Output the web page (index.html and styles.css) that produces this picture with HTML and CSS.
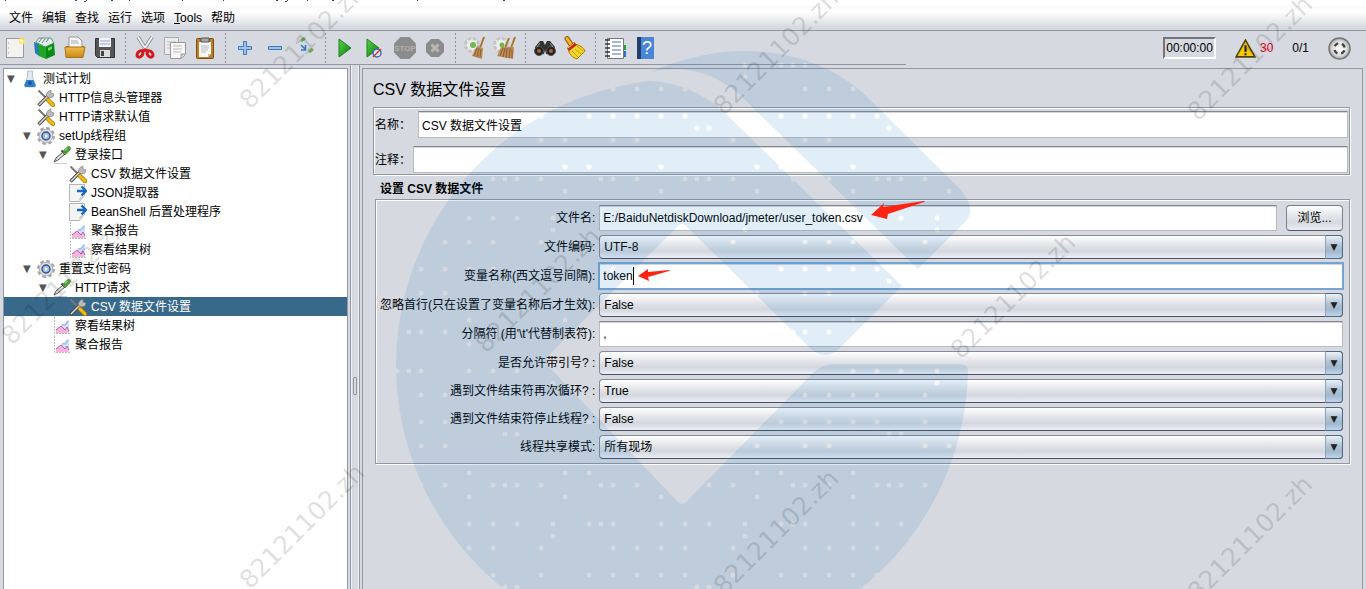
FILE: index.html
```
<!DOCTYPE html>
<html lang="zh-CN">
<head>
    <meta charset="UTF-8">
    <meta name="viewport" content="width=device-width, initial-scale=1.0">
    <title>CSV 数据文件设置</title>
    <link rel="stylesheet" href="styles.css">
</head>
<body>
    <!-- 图标定义 -->
    <svg class="defs" width="0" height="0" aria-hidden="true">
        <defs>
            <linearGradient id="g-green" x1="0" y1="0" x2="1" y2="1"><stop offset="0" stop-color="#5fd04a"/><stop offset="1" stop-color="#067a10"/></linearGradient>
            <linearGradient id="g-gold" x1="0" y1="0" x2="0" y2="1"><stop offset="0" stop-color="#f0bc4c"/><stop offset="1" stop-color="#c98a17"/></linearGradient>
            <radialGradient id="g-ball"><stop offset="0" stop-color="#fff"/><stop offset=".7" stop-color="#ddd"/><stop offset="1" stop-color="#9a9a9a"/></radialGradient>
            <symbol id="i-tools" viewBox="0 0 18 18">
                <path d="M1.500 1.500l8 8" stroke="#777" stroke-width="2"/>
                <path d="M1.500 16.500L12 6" stroke="#444" stroke-width="3.400"/>
                <path d="M2 16L12 6" stroke="#d8d8d8" stroke-width="1.600"/>
                <path d="M11 2.500l3-1.500v3l3 1-1 3-4 1-3-3z" fill="#bbb" stroke="#777" stroke-width=".6"/>
                <path d="M11 11l5 5" stroke="#a97c00" stroke-width="4.400" stroke-linecap="round"/>
                <path d="M11 11l5 5" stroke="#f3bd18" stroke-width="2.800" stroke-linecap="round"/>
            </symbol>
            <symbol id="i-gear" viewBox="0 0 18 18">
                <circle cx="9" cy="9" r="7.800" fill="none" stroke="#a5a5a5" stroke-width="2.400" stroke-dasharray="3.600 2.530"/>
                <circle cx="9" cy="9" r="6.800" fill="#dedede" stroke="#b0b0b0"/>
                <circle cx="9" cy="9" r="4" fill="#9dbbe6" stroke="#35588f" stroke-width="1.500"/>
                <path d="M8 7l3 2-3 2z" fill="#fff"/>
            </symbol>
            <symbol id="i-dropper" viewBox="0 0 18 18">
                <path d="M1 16l2-4 7-6 2 2-7 6z" fill="#ddd" stroke="#555"/>
                <path d="M8.500 4.500l4 4" stroke="#333" stroke-width="2"/>
                <path d="M12 6L15.500 2.500" stroke="#4f9a3c" stroke-width="4.600" stroke-linecap="round"/>
                <path d="M12 4.500L14.500 2" stroke="#8fca7c" stroke-width="1.500"/>
                <path d="M1 17.500h13" stroke="#ccc"/>
            </symbol>
            <symbol id="i-post" viewBox="0 0 18 18">
                <path d="M.5.5h15v11l-5 6H.5z" fill="#f4f4f4" stroke="#b5b5b5"/>
                <path d="M10 17c0-4 2-5 5-5z" fill="#ccc"/>
                <path d="M8 7h8M12.500 2.500L17 7l-4.500 4.500" fill="none" stroke="#1668c4" stroke-width="2.400"/>
            </symbol>
            <symbol id="i-chart" viewBox="0 0 18 18">
                <path d="M1.500 0v16.500H18" fill="none" stroke="#bbb" stroke-dasharray="2 1"/>
                <path d="M8 9c0-2 3-1 4-3s2-3 4-3v13H8z" fill="#cfe0fa"/>
                <path d="M9 8c3-1 3 2 6-4" fill="none" stroke="#7fa8e6"/>
                <path d="M3 16v-3l5-4 4 4 2-2 2 5z" fill="#f5b3dd"/>
                <path d="M3 13l5-4 4 4 2-3 2 4" fill="none" stroke="#c25aa8"/>
            </symbol>
            <symbol id="i-flask" viewBox="0 0 18 18">
                <path d="M6.500 1h5v6l3 8q.5 2-1.500 2H5q-2 0-1.500-2l3-8z" fill="#dfe9f2" stroke="#9fb2c2" stroke-width=".7"/>
                <path d="M5.500 10h7l2 5q.5 2-1.500 2H5q-2 0-1.500-2z" fill="#2f7fcc"/>
                <circle cx="9" cy="13" r="2" fill="#1558a8"/>
            </symbol>
        </defs>
    </svg>

    <div class="page-edge" aria-hidden="true">
        <svg width="520" height="2"><path d="M5 .5h1M75 .5h2M84 1.500h2M86 .5h1M111 .5h2M129 .5h1M182 .5h1M223 .5h1M276 .5h2M285 1.500h2M287 .5h1M307 .5h1M332 .5h2M417 .5h1M503 .5h2" stroke="#445"/></svg>
    </div>

    <nav class="menubar">
        <button>文件</button>
        <button>编辑</button>
        <button>查找</button>
        <button>运行</button>
        <button>选项</button>
        <button><u>T</u>ools</button>
        <button>帮助</button>
    </nav>

    <header class="topbar">
        <div class="toolbar">
            <button aria-label="新建"><svg viewBox="0 0 24 24"><path d="M3.500 2.500h17v19h-17z" fill="#f3f3f2" stroke="#999"/><path d="M5 7h1M5 12h1M5 17h1" stroke="#999"/><circle cx="19" cy="5" r="3.500" fill="#f8e85b" opacity=".8"/><circle cx="19" cy="5" r="1.500" fill="#fffbd0"/></svg></button>
            <button aria-label="模板"><svg viewBox="0 0 24 24"><path d="M3 6l3-4h12l3 5-9 4z" fill="#e0ece8" stroke="#6f9287"/><path d="M6 6l3-4M9 7l3-4M13 6l3-4" stroke="#5c8c85"/><path d="M1 6l5 2v12l-4-3z" fill="#247bb5"/><path d="M5 8l8 3v12l-7-3z" fill="#20a526"/><path d="M13 11l8-4 1 12-9 4z" fill="#078a18"/><path d="M15 12l4-2v3l-4 2z" fill="#72d75e"/></svg></button>
            <button aria-label="打开"><svg viewBox="0 0 24 24"><path d="M3 10h18v10H3z" fill="#a66b13"/><path d="M6 1h9l4 4v9H6z" fill="#f7f7f7" stroke="#999"/><path d="M8 5h7M8 7h8" stroke="#aaa"/><path d="M2 11h20l-2 10.500H3z" fill="url(#g-gold)" stroke="#a97414"/></svg></button>
            <button aria-label="保存"><svg viewBox="0 0 24 24"><path d="M2.500 2.500h19v19h-17l-2-2z" fill="#555" stroke="#333"/><path d="M6 2h12v9H6z" fill="#f2f5f9"/><path d="M7 5h10M7 8h10" stroke="#90a9c6"/><path d="M7 14h10v7H7z" fill="#ddd"/><path d="M8 15h3v5H8z" fill="#444"/></svg></button>
            <span class="sep"></span>
            <button aria-label="剪切"><svg viewBox="0 0 24 24"><path d="M5 1l9 14M19 1l-9 14" stroke="#888" stroke-width="3.600"/><path d="M5 1l9 14M19 1l-9 14" stroke="#eee" stroke-width="2"/><ellipse cx="7" cy="18" rx="2.500" ry="3.500" transform="rotate(40 7 18)" fill="none" stroke="#d3191c" stroke-width="3"/><ellipse cx="17" cy="18" rx="2.500" ry="3.500" transform="rotate(-40 17 18)" fill="none" stroke="#d3191c" stroke-width="3"/><path d="M9 14l3-2 3 2-3 2z" fill="#d3191c"/></svg></button>
            <button aria-label="复制"><svg viewBox="0 0 24 24"><path d="M1.500 1.500h14v17h-14z" fill="#ececec" stroke="#aaa"/><path d="M4 6h9M4 9h9M4 12h9" stroke="#bbb"/><path d="M7.500 6.500h15v12l-4 4h-11z" fill="#f7f7f7" stroke="#999"/><path d="M10 10h9M10 13h9M10 16h8" stroke="#bbb"/><path d="M18 22v-4h4" fill="#ccc" stroke="#999"/></svg></button>
            <button aria-label="粘贴"><svg viewBox="0 0 24 24"><rect x="3.500" y="2.500" width="17" height="20" rx="1" fill="#bb7f25" stroke="#7d4c0b"/><path d="M6 6h12v12l-3 3H6z" fill="#f8f8f8"/><path d="M8 10h8M8 12h8M8 14h7M8 16h5" stroke="#bbb"/><path d="M8 2h8v4H8z" fill="#aaa" stroke="#555"/><path d="M15 21v-3h3" fill="#bbb"/></svg></button>
            <span class="sep"></span>
            <button aria-label="展开"><svg viewBox="0 0 24 24"><path d="M10.500 5.500h3v5h5v3h-5v5h-3v-5h-5v-3h5z" fill="#9fc4ec" stroke="#3d78bd"/></svg></button>
            <button aria-label="折叠"><svg viewBox="0 0 24 24"><path d="M5.500 10.500h13v3h-13z" fill="#9fc4ec" stroke="#3d78bd"/></svg></button>
            <button aria-label="切换"><svg viewBox="0 0 24 24"><path d="M3 7l6-3" stroke="#bbb" stroke-width="2"/><path d="M8 5l4-3" stroke="#6aac5d" stroke-width="3"/><path d="M12 18l5-3" stroke="#bbb" stroke-width="2"/><path d="M16 16l4-3" stroke="#6aac5d" stroke-width="3"/><path d="M8 9l4 4M12.500 9v5H8" fill="none" stroke="#3076cf" stroke-width="1.600"/></svg></button>
            <span class="sep"></span>
            <button aria-label="启动"><svg viewBox="0 0 24 24"><path d="M6 3l12 9-12 9z" fill="url(#g-green)" stroke="#178319"/></svg></button>
            <button aria-label="不停顿开始"><svg viewBox="0 0 24 24"><path d="M4 3l12 9-12 9z" fill="url(#g-green)" stroke="#178319"/><circle cx="14" cy="17" r="4" fill="#e9eef8" fill-opacity=".8" stroke="#3b6dbb" stroke-width="1.500"/><path d="M10 21l8-8" stroke="#d4302d" stroke-width="1.500"/></svg></button>
            <button aria-label="停止" disabled><svg viewBox="0 0 24 24"><path d="M7.500 1h9L23 7.500v9L16.500 23h-9L1 16.500v-9z" fill="#8c8c8c"/><text class="stop-text" x="12" y="15" text-anchor="middle">STOP</text></svg></button>
            <button aria-label="关闭" disabled><svg viewBox="0 0 24 24"><path d="M8 3h8l5 5v8l-5 5H8l-5-5V8z" fill="#8c8c8c"/><path d="M8.500 8.500l7 7m0-7l-7 7" stroke="#b8b8b8" stroke-width="2.800"/></svg></button>
            <span class="sep"></span>
            <button aria-label="清除"><svg viewBox="0 0 24 24"><circle cx="9" cy="9" r="6.500" fill="#eee" stroke="#c4c4c4" stroke-width="3" stroke-dasharray="3.500 1.600"/><circle cx="10" cy="9" r="3" fill="#71b94c"/><path d="M21 1l-4 11" stroke="#a9772f" stroke-width="2"/><path d="M14 10l6 2-1 11-10-3z" fill="#bd8c57"/><path d="M14 12l-3 8m5-8l-2 9m4-8l-1 8" stroke="#8c5d2f"/></svg></button>
            <button aria-label="清除全部"><svg viewBox="0 0 24 24"><circle cx="8" cy="9" r="6.500" fill="#eee" stroke="#c4c4c4" stroke-width="3" stroke-dasharray="3.500 1.600"/><circle cx="9" cy="9" r="2.500" fill="#71b94c"/><path d="M16 2l-4 10M22 1l-4 11" stroke="#a9772f" stroke-width="2"/><path d="M8 11h13l-1 12-16-3z" fill="#bd8c57"/><path d="M10 12l-3 8m5-8l-2 9m4-9l-1 10m4-10l-1 10m3-9v9" stroke="#8c5d2f"/></svg></button>
            <span class="sep"></span>
            <button aria-label="搜索"><svg viewBox="0 0 24 24"><path d="M2 11l5-6h3l2 4 2-4h3l5 6-2 8-7-1-1-4-1 4-7 1z" fill="#333"/><circle cx="6" cy="15" r="4.500" fill="#222" stroke="#555"/><circle cx="18" cy="15" r="4.500" fill="#222" stroke="#555"/><circle cx="6" cy="15" r="2" fill="#a8663f"/><circle cx="18" cy="15" r="2" fill="#a8663f"/><path d="M7 7l-3 4m13-4l3 4" stroke="#999"/></svg></button>
            <button aria-label="重置搜索"><svg viewBox="0 0 24 24"><path d="M4 2.500l4 6" stroke="#94610c" stroke-width="5" stroke-linecap="round"/><path d="M4 2.500l4 6" stroke="#eab735" stroke-width="3" stroke-linecap="round"/><path d="M5 13l7-5q8 2 10 7l-8 8q-7-2-9-10z" fill="#f4d629" stroke="#a47b09"/><path d="M4 12l7-6 3 3-8 6z" fill="#c8291c"/><path d="M5 12l6-5" stroke="#f4d629"/><path d="M9 15l6 6m-3-8l6 5m-4-8l6 5" stroke="#c59b12"/></svg></button>
            <span class="sep"></span>
            <button aria-label="函数助手"><svg viewBox="0 0 24 24"><path d="M19 9h4v5h-4z" fill="#20a531"/><path d="M19 15h4v6h-4z" fill="#2876c9"/><path d="M4.500 2.500h16v20h-16z" fill="#fff" stroke="#777"/><path d="M2 4h5M2 8h5M2 12h5M2 16h5M2 20h5" stroke="#333" stroke-width="1.500"/><path d="M9 6h9M9 10h9M9 14h9M9 18h9" stroke="#4772b3"/></svg></button>
            <button aria-label="帮助"><svg viewBox="0 0 24 24"><path d="M4 1h17v22H4z" fill="#4a86d8"/><path d="M4 1h4v22H4z" fill="#223f68"/><text class="help-text" x="14" y="18" text-anchor="middle">?</text></svg></button>
        </div>
        <div class="status">
            <output class="timer">00:00:00</output>
            <button class="warn"><svg viewBox="0 0 20 18"><path d="M10 1l9 16H1z" fill="#f5c80e" stroke="#4f4408" stroke-width="1.500"/><path d="M10 6v6m0 1.500v2" stroke="#222" stroke-width="2"/></svg><span>30</span></button>
            <span class="threads">0/1</span>
            <svg class="remote" viewBox="0 0 24 24"><circle cx="12" cy="12" r="11" fill="url(#g-ball)" stroke="#777" stroke-width="1.500"/><circle cx="12" cy="12" r="5.500" fill="none" stroke="#444" stroke-width="2.500" stroke-dasharray="4.600 4.040" stroke-dashoffset="-2"/></svg>
        </div>
    </header>

    <div class="workspace">
        <aside class="tree">
            <ul>
                <li class="lv0"><i>▼</i><svg><use href="#i-flask"/></svg>测试计划</li>
                <li class="lv1"><svg><use href="#i-tools"/></svg>HTTP信息头管理器</li>
                <li class="lv1"><svg><use href="#i-tools"/></svg>HTTP请求默认值</li>
                <li class="lv1"><i>▼</i><svg><use href="#i-gear"/></svg>setUp线程组</li>
                <li class="lv2"><i>▼</i><svg><use href="#i-dropper"/></svg>登录接口</li>
                <li class="lv3"><svg><use href="#i-tools"/></svg>CSV 数据文件设置</li>
                <li class="lv3"><svg><use href="#i-post"/></svg>JSON提取器</li>
                <li class="lv3"><svg><use href="#i-post"/></svg>BeanShell 后置处理程序</li>
                <li class="lv3"><svg><use href="#i-chart"/></svg>聚合报告</li>
                <li class="lv3"><svg><use href="#i-chart"/></svg>察看结果树</li>
                <li class="lv1"><i>▼</i><svg><use href="#i-gear"/></svg>重置支付密码</li>
                <li class="lv2"><i>▼</i><svg><use href="#i-dropper"/></svg>HTTP请求</li>
                <li class="lv3 selected"><svg><use href="#i-tools"/></svg>CSV 数据文件设置</li>
                <li class="lv2"><svg><use href="#i-chart"/></svg>察看结果树</li>
                <li class="lv2"><svg><use href="#i-chart"/></svg>聚合报告</li>
            </ul>
        </aside>
        <div class="splitter"><span class="grip"></span></div>
        <main class="panel">
            <h1>CSV 数据文件设置</h1>
            <div class="group meta">
                <div class="meta-row">
                    <label for="name">名称：</label>
                    <input id="name" type="text" value="CSV 数据文件设置">
                </div>
                <div class="meta-row">
                    <label for="comment">注释：</label>
                    <input id="comment" type="text">
                </div>
            </div>

            <h2>设置 CSV 数据文件</h2>
            <div class="group config">
                <label for="filename">文件名:</label>
                <div class="field file-field">
                    <input id="filename" type="text" value="E:/BaiduNetdiskDownload/jmeter/user_token.csv">
                    <button class="browse">浏览...</button>
                    <svg class="mark mark-file" viewBox="0 0 54 20"><path d="M0 14L13 2l-1 4L53 0q2 0 0 1L17 13l-1 5z" fill="#ff2412"/></svg>
                </div>
                <label for="encoding">文件编码:</label>
                <div class="field combo"><select id="encoding"><option>UTF-8</option></select></div>
                <label for="vars">变量名称(西文逗号间隔):</label>
                <div class="field">
                    <input id="vars" class="focused" type="text" value="token">
                    <span class="caret"></span>
                    <svg class="mark mark-vars" viewBox="0 0 32 12"><path d="M0 7L10 0v3l21-2q2 0 0 1L10 8l1 4z" fill="#ff2412"/></svg>
                </div>
                <label for="ignore">忽略首行(只在设置了变量名称后才生效):</label>
                <div class="field combo"><select id="ignore"><option>False</option></select></div>
                <label for="delimiter">分隔符 (用'\t'代替制表符):</label>
                <div class="field"><input id="delimiter" type="text" value=","></div>
                <label for="quoted">是否允许带引号? :</label>
                <div class="field combo"><select id="quoted"><option>False</option></select></div>
                <label for="recycle">遇到文件结束符再次循环? :</label>
                <div class="field combo"><select id="recycle"><option>True</option></select></div>
                <label for="stop">遇到文件结束符停止线程? :</label>
                <div class="field combo"><select id="stop"><option>False</option></select></div>
                <label for="share">线程共享模式:</label>
                <div class="field combo"><select id="share"><option>所有现场</option></select></div>
            </div>
        </main>
    </div>

    <!-- 水印 -->
    <svg class="watermark" width="1366" height="589" aria-hidden="true">
        <mask id="dots" maskUnits="userSpaceOnUse" x="390" y="40" width="590" height="640">
            <path d="M390 40h590v640H390z" fill="#fff"/>
            <path id="dot-path" stroke="#000" stroke-width="5" stroke-linecap="round"/>
        </mask>
        <g mask="url(#dots)" fill="#1473be" fill-opacity=".12">
            <path d="M960 364Q968 364 968 372A286 286 0 1 1 650 81Q690 83 722 110L902 286L842 346Q825 364 808 346L686 226Q682 222 678 226L550 354Q543 361 550 368L678 502Q682 506 686 502L812 374Q822 364 834 364Z"/>
            <path d="M650 72Q700 51 745 51Q815 52 862 92L960 189Q979 211 963 224L918 269L740 95Q700 60 650 72Z"/>
        </g>
        <g class="stamp">
            <text transform="translate(250 110) rotate(-45)">82121102.zh</text>
            <text transform="translate(12 346) rotate(-45)">82121102.zh</text>
            <text transform="translate(250 590) rotate(-45)">82121102.zh</text>
            <text transform="translate(486 354) rotate(-45)">82121102.zh</text>
            <text transform="translate(724 116) rotate(-45)">82121102.zh</text>
            <text transform="translate(961 360) rotate(-45)">82121102.zh</text>
            <text transform="translate(724 596) rotate(-45)">82121102.zh</text>
            <text transform="translate(1198 122) rotate(-45)">82121102.zh</text>
            <text transform="translate(1198 602) rotate(-45)">82121102.zh</text>
        </g>
    </svg>
    <script src="dots.js"></script>
</body>
</html>
```
FILE: styles.css
```
*, *::before, *::after {
    box-sizing: border-box;
}
body {
    margin: 0;
    height: 100vh;
    display: flex;
    flex-direction: column;
    overflow: hidden;
    position: relative;
    background: #d6d9e0;
    color: #000;
    font-family: "Liberation Sans", "Noto Sans CJK SC", sans-serif;
    font-size: 12px;
    line-height: 18px;
}
button, input, select {
    font: inherit;
    color: inherit;
}
.defs {
    position: absolute;
}
.page-edge {
    height: 6px;
    background: #fff;
}
.page-edge svg {
    display: block;
}
.menubar {
    display: flex;
    gap: 9px;
    height: 25px;
    padding: 0 9px;
    background: linear-gradient(#f8f9fa, #fff 25%, #d6d9e0 90%);
    border-bottom: 1px solid #9297a1;
}
.menubar button {
    padding: 0;
    border: none;
    background: none;
}
.topbar {
    display: flex;
    height: 34px;
}
.toolbar {
    flex: 1;
    display: flex;
    border-bottom: 1px solid #9297a1;
}
.toolbar button {
    width: 30px;
    padding: 0;
    border: none;
    background: none;
    display: flex;
    align-items: center;
    justify-content: center;
}
.toolbar svg {
    width: 24px;
    height: 24px;
}
.sep {
    width: 10px;
    background: linear-gradient(#8b8f99 50%, transparent 50%) 5px 2px / 1px 4px repeat-y;
}
.stop-text {
    font-size: 8px;
    font-weight: bold;
    fill: #b0b0b0;
}
.help-text {
    font-size: 18px;
    fill: #fff;
}
.status {
    flex: 0 0 460px;
    display: flex;
    align-items: center;
    justify-content: flex-end;
    gap: 19px;
    padding-right: 15px;
}
.timer {
    padding: 0 1px;
    border: 2px solid;
    border-color: #73757a #fff #fff #73757a;
}
.warn {
    display: flex;
    align-items: center;
    gap: 4px;
    padding: 0;
    border: none;
    background: none;
    color: #f00018;
}
.warn svg {
    width: 21px;
    height: 19px;
}
.remote {
    width: 23px;
    height: 23px;
}
.workspace {
    flex: 1;
    display: flex;
    min-height: 0;
    padding: 3px 3px 0;
}
.tree {
    flex: 0 0 345px;
    border: 1px solid #9297a1;
    border-bottom: none;
    background: #fff;
}
.tree ul {
    list-style: none;
    margin: 0;
    padding: 0;
}
.tree li {
    display: flex;
    align-items: center;
    gap: 4px;
    height: 19px;
    white-space: nowrap;
}
.tree li svg {
    width: 18px;
    height: 18px;
}
.tree i {
    width: 10px;
    margin-left: -14px;
    font: 10px "DejaVu Sans", sans-serif;
    color: #555;
}
.lv0 {
    padding-left: 17px;
}
.lv1 {
    padding-left: 33px;
}
.lv2 {
    padding-left: 49px;
}
.lv3 {
    padding-left: 65px;
}
.tree .selected {
    background: #39698a;
    color: #fff;
}
.splitter {
    flex: 0 0 14px;
    margin: -3px 0 0 0;
    display: flex;
    align-items: center;
    justify-content: center;
    background: linear-gradient(to right, transparent 2px, #9297a1 2px, #9297a1 3px, #f0f1f4 3px, #f0f1f4 4px, transparent 4px, transparent 10px, #f0f1f4 10px, #f0f1f4 11px, #9297a1 11px, #9297a1 12px, transparent 12px);
}
.grip {
    width: 4px;
    height: 18px;
    margin-top: 118px;
    border: 1px solid #9297a1;
    border-radius: 1px;
}
.panel {
    flex: 1;
    min-width: 0;
    padding: 9px 12px 0 10px;
    border: 1px solid #9297a1;
    border-bottom: none;
}
.panel h1 {
    margin: 0 0 5px;
    font-size: 16px;
    font-weight: normal;
    line-height: 24px;
}
.panel h2 {
    margin: 5px 0 0 7px;
    font-size: 12px;
    line-height: 19px;
}
.group {
    border: 1px solid #9297a1;
    box-shadow: inset 1px 1px 0 #fff, 1px 1px 0 #fff;
}
.meta {
    display: flex;
    flex-direction: column;
    gap: 8px;
    padding: 3px 1px 1px;
}
.meta-row {
    display: flex;
    align-items: center;
    gap: 2px;
}
.meta-row:first-child {
    gap: 7px;
}
input {
    flex: 1;
    min-width: 0;
    width: 100%;
    height: 26px;
    padding: 0 3px;
    background: #fff;
    border: 1px solid #b9bbc0;
    border-top-color: #84878e;
    border-radius: 0;
    box-shadow: inset 0 1px 0 #d5d6d9;
    outline: none;
}
.meta input {
    height: 27px;
}
.focused {
    outline: 2px solid #75a4d3;
    outline-offset: -1px;
}
.config {
    display: grid;
    grid-template-columns: auto 1fr;
    align-items: center;
    gap: 4px;
    margin: 0 0 0 2px;
    padding: 5px 6px 4px 4px;
}
.config label {
    text-align: right;
}
.field {
    position: relative;
    display: flex;
}
.file-field {
    gap: 9px;
}
.browse {
    width: 57px;
    height: 26px;
    padding: 0;
    border: 1px solid #7d8088;
    border-bottom-color: #555861;
    border-radius: 4px;
    background: linear-gradient(#fff, #e1e3e8 45%, #d6d9e0 70%, #eceef6);
}
.combo select {
    appearance: none;
    flex: 1;
    height: 24px;
    padding: 0 20px 0 4px;
    border: 1px solid #868a94;
    border-bottom-color: #4c505c;
    border-radius: 4px;
    background: linear-gradient(#fff, #e1e3e8 45%, #d3d7de 70%, #eceef8);
}
.combo::after {
    content: "▼";
    position: absolute;
    top: 0;
    right: 0;
    width: 18px;
    height: 24px;
    border: 1px solid #4c6683;
    border-left-color: #8ba2b8;
    border-radius: 0 4px 4px 0;
    background: linear-gradient(#eaf1f6, #afc3d5 45%, #a2b8cb 70%, #bcd5ee);
    color: #222;
    font: 9px/22px "DejaVu Sans", sans-serif;
    text-align: center;
    pointer-events: none;
}
.caret {
    position: absolute;
    left: 34px;
    top: 4px;
    width: 1px;
    height: 18px;
    background: #000;
}
.mark {
    position: absolute;
    z-index: 2;
}
.mark-file {
    left: 272px;
    top: -4px;
    width: 54px;
    height: 20px;
}
.mark-vars {
    left: 39px;
    top: 6px;
    width: 32px;
    height: 12px;
}
.watermark {
    position: absolute;
    left: 0;
    top: 0;
    z-index: 1;
    pointer-events: none;
}
.stamp {
    font-family: "DejaVu Sans", sans-serif;
    font-size: 25px;
    fill: #000;
    fill-opacity: .14;
}
```
FILE: dots.js
```
// 水印圆点：每行 [y, x...]
const rows = [
    [65, 745, 781, 793, 805], [77, 745],
    [89, 613, 637, 661, 685, 805, 829, 853],
    [116, 541, 589, 613, 637, 661, 685, 781, 805, 829, 853, 877],
    [128, 697, 709, 889],
    [140, 541, 565, 613, 637, 733, 757, 805, 829],
    [167, 565, 589, 661, 757, 781, 853],
    [179, 493, 505, 517, 541, 601, 613, 637, 685, 697, 709, 733, 793, 829, 877, 889, 901, 925],
    [191, 565, 661, 757, 853, 949],
    [218, 469, 493, 517, 553, 901, 937],
    [230, 553, 745, 937],
    [242, 445, 469, 493, 541, 733, 805, 829, 853, 925],
    [269, 421, 445, 469, 493, 613, 781, 805, 829, 853, 877],
    [281, 889],
    [293, 421, 445, 757, 805, 829],
    [320, 469, 565, 853],
    [332, 409, 421, 445, 793, 805, 829],
    [344, 469],
    [371, 397, 409, 421, 469, 493, 517, 853, 877, 901, 937],
    [383, 553, 937],
    [395, 421, 445, 493, 805, 829, 853, 877, 925],
    [422, 421, 445, 493, 541, 565, 589, 781, 805, 829, 853, 877, 925],
    [434, 505, 517, 889, 901],
    [446, 421, 445, 757, 805, 829, 925, 949],
    [473, 469, 565, 589, 757, 781, 853],
    [485, 421, 445, 493, 505, 517, 541, 601, 613, 637, 709, 733, 793, 805, 829, 877, 889, 901, 925],
    [497, 469, 565, 661, 757, 853],
    [524, 469, 493, 517, 553, 589, 601, 613, 661, 685, 709, 745, 781, 793, 805, 853, 877, 901],
    [536, 553, 745],
    [548, 469, 493, 541, 613, 637, 661, 685, 733, 805, 829, 853, 877],
    [575, 493, 541, 589, 613, 637, 661, 685, 733, 781, 805, 829, 853, 877],
    [587, 505, 517, 697, 709]
];
const d = rows.map(([y, ...xs]) => xs.map(x => `M${x} ${y}h0`).join('')).join('');
document.getElementById('dot-path').setAttribute('d', d);
```
